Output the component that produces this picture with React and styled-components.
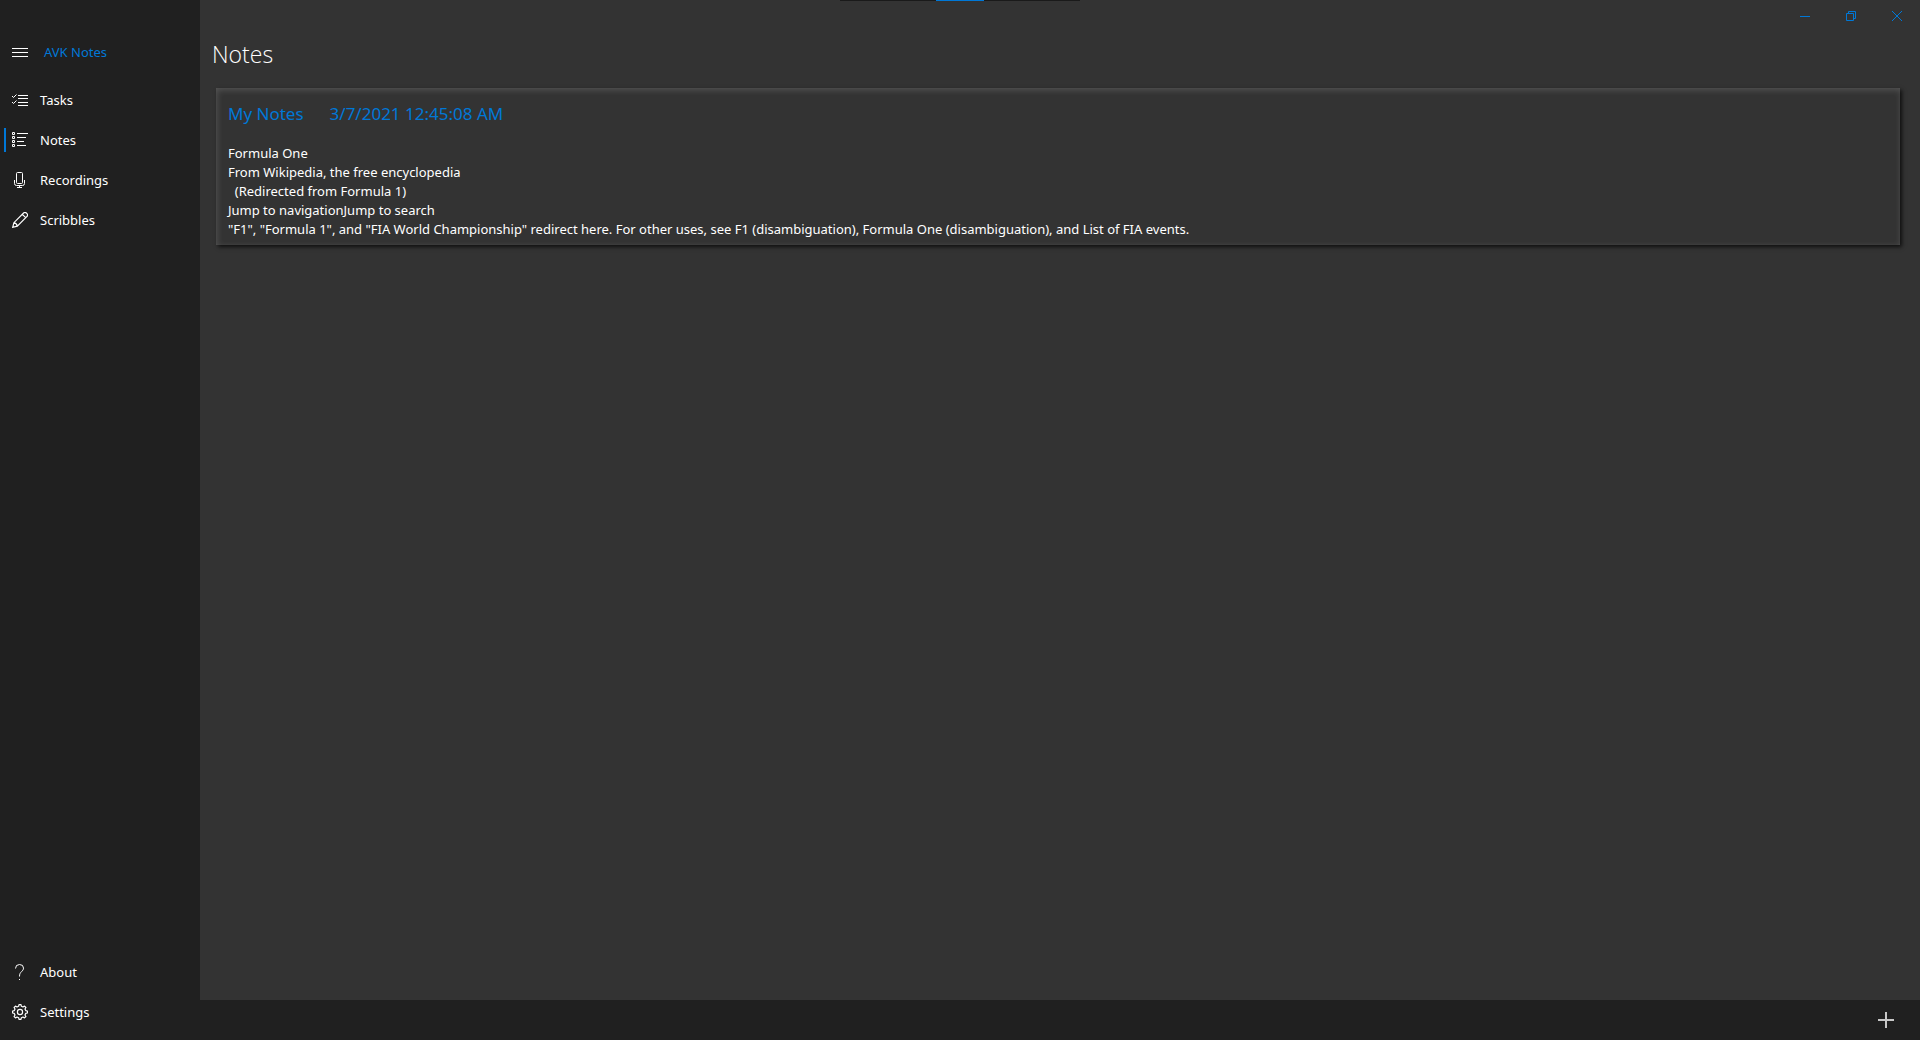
import React, { useState } from "react";
import styled, { createGlobalStyle } from "styled-components";

const ACCENT = "#0078d7";

const GlobalStyle = createGlobalStyle`
  * { box-sizing: border-box; }
  body {
    margin: 0;
    background: #202020;
    color: #fff;
    font-family: "Segoe UI", "Noto Sans", "Open Sans", sans-serif;
    font-size: 13px;
    line-height: 20px;
  }
  button { font: inherit; color: inherit; background: none; border: 0; padding: 0; }
`;

const Window = styled.div`
  display: flex;
  min-height: 100vh;
`;

const DragBar = styled.div`
  position: absolute;
  top: 0;
  left: 50%;
  transform: translateX(-50%);
  display: flex;
  justify-content: center;
  width: 240px;
  height: 1px;
  background: #1a1a1a;
`;

const DragGrip = styled.span`
  width: 48px;
  background: ${ACCENT};
`;

const Sidebar = styled.aside`
  flex: 0 0 200px;
  display: flex;
  flex-direction: column;
  padding: 32px 0 8px;
  background: #202020;
`;

const Brand = styled.div`
  display: flex;
  align-items: center;
  height: 40px;
  margin-bottom: 8px;
  color: ${ACCENT};
`;

const MenuButton = styled.button`
  display: grid;
  place-items: center;
  width: 40px;
  height: 40px;
  margin-right: 4px;
  color: #fff;
`;

const NavList = styled.nav`
  display: flex;
  flex-direction: column;
  margin-top: ${(p) => (p.$bottom ? "auto" : "0")};
`;

const NavLink = styled.a`
  display: flex;
  align-items: center;
  height: 40px;
  color: #fff;
  text-decoration: none;
`;

const Marker = styled.span`
  width: 2px;
  height: 24px;
  margin-left: 4px;
  background: ${(p) => (p.$active ? ACCENT : "transparent")};
`;

const NavIcon = styled.span`
  display: grid;
  margin: 0 12px 0 6px;
`;

const NavText = styled.span`
  white-space: nowrap;
`;

const Icon = styled.svg.attrs({ "aria-hidden": true })`
  display: block;
  width: ${(p) => p.$size || 16}px;
  height: ${(p) => p.$size || 16}px;
  fill: none;
  stroke: currentColor;
  stroke-width: 1;
`;

const Main = styled.main`
  flex: 1;
  min-width: 0;
  display: flex;
  flex-direction: column;
`;

const Content = styled.div`
  flex: 1;
  background: #333;
`;

const Caption = styled.div`
  display: flex;
  justify-content: flex-end;
`;

const CaptionButton = styled.button`
  display: grid;
  place-items: center;
  width: 46px;
  height: 32px;
  color: ${ACCENT};
`;

const PageTitle = styled.h1`
  margin: 4px 12px 16px;
  font-family: "Segoe UI", "Open Sans", "Noto Sans", sans-serif;
  font-size: 23px;
  line-height: 36px;
  font-weight: 300;
`;

const NoteCard = styled.article`
  margin: 0 20px 0 16px;
  padding: 12px 12px 6px;
  background: #333;
  box-shadow:
    inset 1px 2px 6px rgba(255, 255, 255, 0.16),
    inset 0 0 1px rgba(255, 255, 255, 0.1),
    2px 2px 4px rgba(0, 0, 0, 0.7);
`;

const NoteHeader = styled.header`
  display: flex;
  gap: 26px;
  margin-bottom: 16px;
  color: ${ACCENT};
  font-size: 17px;
  line-height: 28px;
`;

const NoteTitle = styled.h2`
  margin: 0;
  font: inherit;
`;

const NoteBody = styled.p`
  margin: 0;
  white-space: pre-wrap;
  line-height: 19px;
`;

const CommandBar = styled.footer`
  display: flex;
  justify-content: flex-end;
  padding-right: 10px;
  background: #202020;
`;

const AddButton = styled.button`
  display: grid;
  place-items: center;
  width: 48px;
  height: 40px;
  color: #c8c8c8;
`;

const icons = {
  menu: <path d="M0 4.500h16M0 8.500h16M0 12.500h16" />,
  tasks: (
    <>
      <path d="M6 3.500h10M6 6.500h10M6 10.500h10M6 13.500h10" />
      <path d="M0 4l1.500 1.500L4.500 2.500M0 10l1.500 1.500L4.500 8.500" />
    </>
  ),
  notes: (
    <>
      <path d="M5 1.500h11M5 5.500h9M5 9.500h7M5 13.500h9" />
      <path d="M.5.5h2v2h-2zM.5 4.500h2v2h-2zM.5 8.500h2v2h-2zM.5 12.500h2v2h-2z" />
    </>
  ),
  mic: (
    <>
      <rect x="4.500" y=".5" width="6" height="11" rx="1" />
      <path d="M2.500 8v3.500q0 2 2 2h6q2 0 2-2V8M7.500 13.500v2M5 15.500h5" />
    </>
  ),
  pen: (
    <path
      strokeWidth="1.200"
      d="M.7 15.300l1.200-4.600L11.600 1a1.900 1.900 0 0 1 2.700 0l.7.700a1.900 1.900 0 0 1 0 2.700L5.300 14.100zM10.300 2.300l3.400 3.400M1.900 10.700q2.600.4 3.400 3.400"
    />
  ),
  help: (
    <>
      <path d="M3.500 4.500q0-4 4-4t4 3.600c0 1.500-.8 2.400-2 3.600S7.500 9.800 7.500 12.500" />
      <path d="M7.500 15v1" />
    </>
  ),
  gear: (
    <>
      <path
        strokeLinejoin="round"
        strokeWidth="1.200"
        d="M6.600 2.300L7 .6h2l.4 1.700 1.600.7 1.500-.9 1.400 1.400-.9 1.500.7 1.600 1.700.4v2l-1.700.4-.7 1.600.9 1.500-1.400 1.400-1.500-.9-1.600.7L9 15.400H7l-.4-1.700L5 13l-1.500.9-1.400-1.400.9-1.500-.7-1.600L.6 9V7l1.700-.4L3 5l-.9-1.500 1.400-1.400L5 3z"
      />
      <circle cx="8" cy="8" r="2.600" strokeWidth="1.200" />
    </>
  ),
};

function Glyph({ name }) {
  return <Icon viewBox="0 0 16 16">{icons[name]}</Icon>;
}

const topItems = [
  ["Tasks", "tasks"],
  ["Notes", "notes"],
  ["Recordings", "mic"],
  ["Scribbles", "pen"],
];
const bottomItems = [
  ["About", "help"],
  ["Settings", "gear"],
];

const noteText = `Formula One
From Wikipedia, the free encyclopedia
  (Redirected from Formula 1)
Jump to navigationJump to search
"F1", "Formula 1", and "FIA World Championship" redirect here. For other uses, see F1 (disambiguation), Formula One (disambiguation), and List of FIA events.`;

function Navigation({ items, active, onSelect, bottom, label }) {
  return (
    <NavList $bottom={bottom} aria-label={label}>
      {items.map(([text, icon]) => (
        <NavLink
          key={text}
          href={`#${text.toLowerCase()}`}
          aria-current={active === text ? "page" : undefined}
          onClick={() => onSelect(text)}
        >
          <Marker $active={active === text} />
          <NavIcon>
            <Glyph name={icon} />
          </NavIcon>
          <NavText>{text}</NavText>
        </NavLink>
      ))}
    </NavList>
  );
}

export default function App() {
  const [active, setActive] = useState("Notes");
  return (
    <>
      <GlobalStyle />
      <Window>
        <Sidebar>
          <Brand>
            <MenuButton aria-label="Toggle navigation">
              <Glyph name="menu" />
            </MenuButton>
            <NavText>AVK Notes</NavText>
          </Brand>
          <Navigation label="Sections" items={topItems} active={active} onSelect={setActive} />
          <Navigation label="Application" items={bottomItems} active={active} onSelect={setActive} bottom />
        </Sidebar>
        <Main>
          <Content>
            <Caption>
              <CaptionButton aria-label="Minimize">
                <Icon $size={10} viewBox="0 0 10 10"><path d="M0 5.500h10" /></Icon>
              </CaptionButton>
              <CaptionButton aria-label="Restore">
                <Icon $size={10} viewBox="0 0 10 10"><path d="M.5 2.500h7v7h-7zM2.500 2.500v-2h7v7h-2" /></Icon>
              </CaptionButton>
              <CaptionButton aria-label="Close">
                <Icon $size={10} viewBox="0 0 10 10"><path d="M0 0l10 10M10 0L0 10" /></Icon>
              </CaptionButton>
            </Caption>
            <PageTitle>Notes</PageTitle>
            <NoteCard>
              <NoteHeader>
                <NoteTitle>My Notes</NoteTitle>
                <time dateTime="2021-03-07T00:45:08">3/7/2021 12:45:08 AM</time>
              </NoteHeader>
              <NoteBody>{noteText}</NoteBody>
            </NoteCard>
          </Content>
          <CommandBar>
            <AddButton aria-label="Add note">
              <Icon viewBox="0 0 16 16"><path strokeWidth="2" d="M8 0v16M0 8h16" /></Icon>
            </AddButton>
          </CommandBar>
        </Main>
      </Window>
      <DragBar>
        <DragGrip />
      </DragBar>
    </>
  );
}
